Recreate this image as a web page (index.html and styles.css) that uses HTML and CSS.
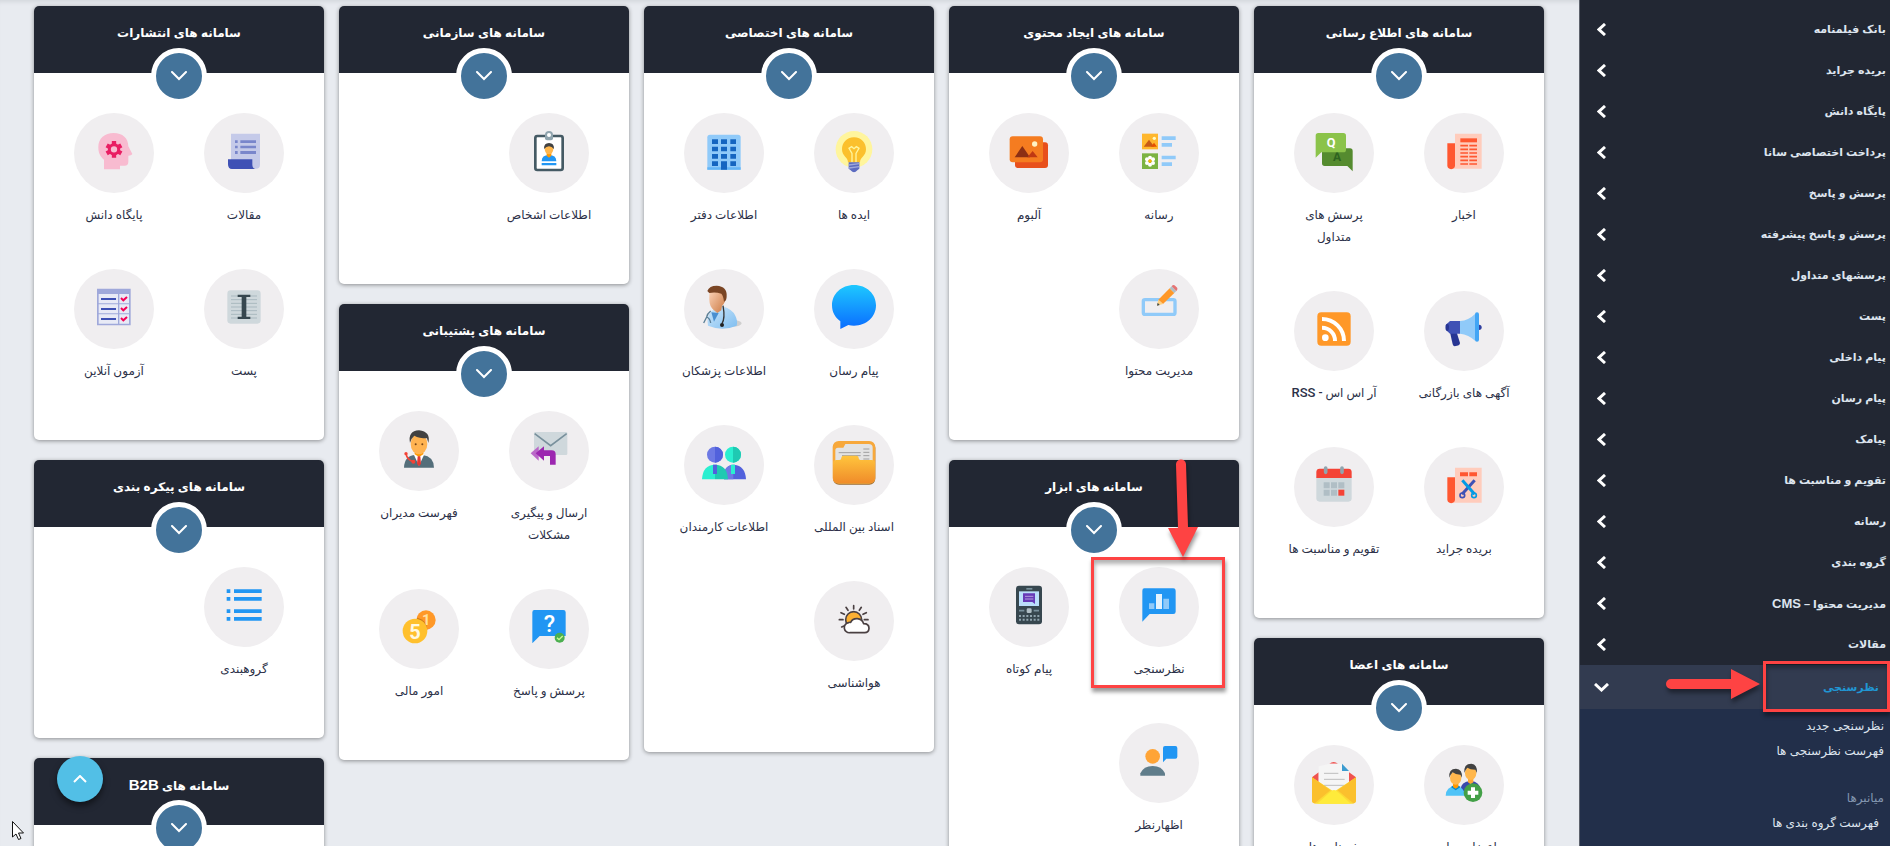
FILE: index.html
```html
<!DOCTYPE html>
<html lang="fa" dir="rtl">
<head>
    <meta charset="UTF-8">
    <title>پنل مدیریت</title>
    <link rel="stylesheet" href="styles.css">
</head>
<body>
<svg class="sprite">
    <symbol id="arrow" viewBox="0 0 9 13"><path d="M8 1L2 6.5L8 12"/></symbol>
    <symbol id="chevron" viewBox="0 0 16 10"><path d="M1 1L8 8L15 1"/></symbol>
</svg>
<div class="layout">
    <!-- منوی کناری -->
    <nav class="sidebar">
        <ul class="menu">
            <li><a href="#">بانک فیلمنامه<svg class="arrow"><use href="#arrow"/></svg></a></li>
            <li><a href="#">بریده جراید<svg class="arrow"><use href="#arrow"/></svg></a></li>
            <li><a href="#">پایگاه دانش<svg class="arrow"><use href="#arrow"/></svg></a></li>
            <li><a href="#">پرداخت اختصاصی سانا<svg class="arrow"><use href="#arrow"/></svg></a></li>
            <li><a href="#">پرسش و پاسخ<svg class="arrow"><use href="#arrow"/></svg></a></li>
            <li><a href="#">پرسش و پاسخ پیشرفته<svg class="arrow"><use href="#arrow"/></svg></a></li>
            <li><a href="#">پرسشهای متداول<svg class="arrow"><use href="#arrow"/></svg></a></li>
            <li><a href="#">پست<svg class="arrow"><use href="#arrow"/></svg></a></li>
            <li><a href="#">پیام داخلی<svg class="arrow"><use href="#arrow"/></svg></a></li>
            <li><a href="#">پیام رسان<svg class="arrow"><use href="#arrow"/></svg></a></li>
            <li><a href="#">پیامک<svg class="arrow"><use href="#arrow"/></svg></a></li>
            <li><a href="#">تقویم و مناسبت ها<svg class="arrow"><use href="#arrow"/></svg></a></li>
            <li><a href="#">رسانه<svg class="arrow"><use href="#arrow"/></svg></a></li>
            <li><a href="#">گروه بندی<svg class="arrow"><use href="#arrow"/></svg></a></li>
            <li><a href="#"><span>مدیریت محتوا – <span class="latin">CMS</span></span><svg class="arrow"><use href="#arrow"/></svg></a></li>
            <li><a href="#">مقالات<svg class="arrow"><use href="#arrow"/></svg></a></li>
            <li class="open">
                <a href="#">نظرسنجی<svg class="arrow arrow-down" viewBox="0 0 15 9"><path d="M1 1L7.5 7L14 1"/></svg></a>
                <span class="mark mark-menu"></span>
                <svg class="pointer pointer-menu" viewBox="0 0 94 30"><path d="M5 10H65V0L94 15L65 30V20H5A5 5 0 0 1 5 10Z"/></svg>
            </li>
        </ul>
        <ul class="submenu">
            <li><a href="#">نظرسنجی جدید</a></li>
            <li><a href="#">فهرست نظرسنجی ها</a></li>
            <li class="submenu-title">میانبرها</li>
            <li class="shortcut"><a href="#">فهرست گروه بندی ها</a></li>
        </ul>
    </nav>

    <!-- کارت سامانه ها -->
    <main class="board">
        <div class="column">
            <section class="card">
                <header class="card-header">
                    <h2>سامانه های اطلاع رسانی</h2>
                    <button class="toggle" aria-label="باز و بسته"><svg><use href="#chevron"/></svg></button>
                </header>
                <div class="tiles">
                    <a class="tile" href="#">
                        <span class="icon"><svg viewBox="0 0 132 132">
                            <path fill="#ffccbc" d="M39 14H119V119H28V100H39Z"/>
                            <path fill="#ff5730" d="M16 43H39V109A11 11 0 0 1 16 109Z"/>
                            <path fill="#ff5730" d="M55 28H105V40H55Z"/>
                            <path stroke="#ff5730" stroke-width="5" stroke-dasharray="23 4" d="M55 50H105M55 61H105M55 72H105M55 83H105M55 94H105M55 105H105"/>
                        </svg></span>
                        <span class="label">اخبار</span>
                    </a>
                    <a class="tile" href="#">
                        <span class="icon"><svg viewBox="0 0 132 132">
                            <path fill="#558b2f" d="M38 58H114Q122 58 122 66V127L106 111H38Q30 111 30 103V66Q30 58 38 58Z"/>
                            <text x="75" y="97" font-size="36" font-weight="bold" fill="#2e6320" text-anchor="middle">A</text>
                            <path fill="#8bc34a" d="M19 12H94Q102 12 102 20V62Q102 70 94 70H28L11 86V20Q11 12 19 12Z"/>
                            <text x="57" y="54" font-size="38" font-weight="bold" fill="#fff" text-anchor="middle">Q</text>
                        </svg></span>
                        <span class="label">پرسش های<br>متداول</span>
                    </a>
                    <a class="tile" href="#">
                        <span class="icon"><svg viewBox="0 0 132 132">
                            <circle cx="111" cy="61" r="8" fill="#303f9f"/>
                            <path fill="#90caf9" d="M54 42Q80 40 100 20V102Q80 82 54 80Z"/>
                            <path fill="#42a5f5" d="M99 22A6 6 0 0 1 111 22V98A6 6 0 0 1 99 98Z"/>
                            <path fill="#283593" d="M24 76H44L54 108Q54 116 38 118Q34 118 32 112Z"/>
                            <path fill="#3f51b5" d="M54 42V80H24L11 68V54L24 42Z"/>
                            <ellipse cx="16" cy="61" rx="5" ry="11" fill="#283593"/>
                        </svg></span>
                        <span class="label">آگهی های بازرگانی</span>
                    </a>
                    <a class="tile" href="#">
                        <span class="icon"><svg viewBox="0 0 132 132">
                            <rect x="16" y="16" width="100" height="100" rx="12" fill="#ff9828"/>
                            <circle cx="40" cy="92" r="10" fill="#fff"/>
                            <path fill="none" stroke="#fff" stroke-width="12" d="M30 62A39 39 0 0 1 69 102M30 36A66 66 0 0 1 96 102"/>
                        </svg></span>
                        <span class="label">آر اس اس - <span class="latin">RSS</span></span>
                    </a>
                    <a class="tile" href="#">
                        <span class="icon"><svg viewBox="0 0 132 132">
                            <path fill="#ffccbc" d="M39 14H119V119H28V100H39Z"/>
                            <path fill="#ff5730" d="M16 43H39V109A11 11 0 0 1 16 109Z"/>
                            <path fill="#ff5730" d="M54 28H78V40H54ZM82 28H105V40H82Z"/>
                            <path stroke="#3f51b5" stroke-width="9" d="M98 52L60 94"/>
                            <path stroke="#039be5" stroke-width="9" d="M61 52L98 94"/>
                            <g fill="none" stroke-width="5"><circle cx="61" cy="97" r="7" stroke="#3f51b5"/><circle cx="96" cy="97" r="7" stroke="#039be5"/></g>
                        </svg></span>
                        <span class="label">بریده جراید</span>
                    </a>
                    <a class="tile" href="#">
                        <span class="icon"><svg viewBox="0 0 132 132">
                            <path fill="#cfd8dc" d="M13 40H119V106Q119 116 109 116H23Q13 116 13 106Z"/>
                            <path fill="#f44336" d="M23 17H109Q119 17 119 27V45H13V27Q13 17 23 17Z"/>
                            <path stroke="#90a4ae" stroke-width="11" stroke-linecap="round" d="M41 15V28M90 15V28"/>
                            <path fill="#b0bec5" d="M35 58H53V76H35ZM57 58H75V76H57ZM79 58H97V76H79ZM35 80H53V98H35ZM57 80H75V98H57Z"/>
                            <path fill="#f44336" d="M79 80H97V98H79Z"/>
                        </svg></span>
                        <span class="label">تقویم و مناسبت ها</span>
                    </a>
                </div>
            </section>
            <section class="card">
                <header class="card-header">
                    <h2>سامانه های اعضا</h2>
                    <button class="toggle" aria-label="باز و بسته"><svg><use href="#chevron"/></svg></button>
                </header>
                <div class="tiles">
                    <a class="tile" href="#">
                        <span class="icon"><svg viewBox="0 0 132 132">
                            <path fill="#3949ab" d="M56 86Q56 62 86 60Q114 62 116 88V95H56Z"/>
                            <path fill="#ffa733" d="M78 50H94V64L86 70L78 64Z"/>
                            <ellipse cx="86" cy="37" rx="17" ry="20" fill="#ffb74d"/>
                            <path fill="#424242" d="M67 36Q64 8 88 8Q107 10 105 36L100 26Q84 26 76 20Q70 26 67 36Z"/>
                            <path fill="#4fc3f7" d="M11 104Q12 77 41 75Q66 77 70 104Z"/>
                            <path fill="#0288d1" d="M27 78L41 88L56 78L50 74H32Z"/>
                            <path fill="#ff9800" d="M33 66H49V78L41 83L33 78Z"/>
                            <ellipse cx="41" cy="51" rx="17" ry="20" fill="#ffb74d"/>
                            <path fill="#424242" d="M22 50Q19 23 42 23Q62 25 60 50L55 41Q40 41 32 34Q26 40 22 50Z"/>
                            <circle cx="93" cy="95" r="28" fill="#43a047"/>
                            <path fill="#fff" d="M87 79H99V89H109V101H99V111H87V101H77V89H87Z"/>
                        </svg></span>
                        <span class="label">اعضای سایت</span>
                    </a>
                    <a class="tile" href="#">
                        <span class="icon"><svg viewBox="0 0 132 132">
                            <path fill="#ef5350" d="M0 49L20 34V66H0ZM132 49L111 34V66H132ZM52 8Q65 -2 78 8Z"/>
                            <path fill="#f5f5f5" d="M20 16L54 8H88L111 32V90H20Z"/>
                            <path fill="#3b9bd0" d="M90 8L111 30H90Z"/>
                            <path stroke="#bdbdbd" stroke-width="3" d="M36 37H79M36 55H98M36 73H98"/>
                            <path fill="#fdd835" d="M0 49L66 92L132 49V118Q132 128 122 128H10Q0 128 0 118Z"/>
                            <path fill="#fbc02d" d="M0 49L55 88L8 127Q0 126 0 118ZM132 49L77 88L124 127Q132 126 132 118Z"/>
                            <path fill="#ffeb3b" d="M15 128L58 90Q66 84 74 90L117 128Z"/>
                        </svg></span>
                        <span class="label">خبرنامه ها</span>
                    </a>
                </div>
            </section>
        </div>

        <div class="column">
            <section class="card">
                <header class="card-header">
                    <h2>سامانه های ایجاد محتوی</h2>
                    <button class="toggle" aria-label="باز و بسته"><svg><use href="#chevron"/></svg></button>
                </header>
                <div class="tiles">
                    <a class="tile" href="#">
                        <span class="icon"><svg viewBox="0 0 132 132">
                            <path fill="#ffb72d" d="M15 14H63V61H15Z"/>
                            <path fill="#c75a16" d="M20 53L36 32L52 53Z"/>
                            <path fill="#e65100" d="M42 53L51 41L60 53Z"/>
                            <circle cx="52" cy="28" r="5" fill="#fff9c4"/>
                            <path fill="#7cb342" d="M15 73H63V120H15Z"/>
                            <g fill="#fff"><circle cx="39" cy="86" r="6"/><circle cx="39" cy="107" r="6"/><circle cx="30" cy="91" r="6"/><circle cx="48" cy="91" r="6"/><circle cx="30" cy="102" r="6"/><circle cx="48" cy="102" r="6"/></g>
                            <circle cx="39" cy="96" r="5" fill="#ffb300"/>
                            <path fill="#90caf9" d="M74 22H116V33H74ZM74 42H105V53H74ZM74 80H116V91H74ZM74 100H105V111H74Z"/>
                        </svg></span>
                        <span class="label">رسانه</span>
                    </a>
                    <a class="tile" href="#">
                        <span class="icon"><svg viewBox="0 0 132 132">
                            <rect x="24" y="40" width="99" height="77" rx="9" fill="#e8501c"/>
                            <rect x="8" y="22" width="100" height="78" rx="9" fill="#f57c20"/>
                            <path fill="#8c2f14" d="M23 85L46 51L69 85Z"/>
                            <path fill="#bf3813" d="M61 85L77 66L92 85Z"/>
                            <circle cx="83" cy="45" r="8" fill="#fff3c4"/>
                        </svg></span>
                        <span class="label">آلبوم</span>
                    </a>
                    <a class="tile" href="#">
                        <span class="icon"><svg viewBox="0 0 132 132">
                            <rect x="19" y="44" width="95" height="44" rx="5" fill="none" stroke="#90caf9" stroke-width="10"/>
                            <path fill="#ff9828" d="M64 44L98 10L112 24L78 57Z"/>
                            <path fill="#ffd180" d="M64 44L78 57L60 62Z"/>
                            <path fill="#37474f" d="M62 53L68 60L60 62Z"/>
                            <path fill="#b0bec5" d="M98 10L104 4L118 18L112 24Z"/>
                            <path fill="#e57373" d="M104 4Q109 -3 115 3L119 7Q124 12 118 18Z"/>
                        </svg></span>
                        <span class="label">مدیریت محتوا</span>
                    </a>
                </div>
            </section>
            <section class="card">
                <header class="card-header">
                    <h2>سامانه های ابزار</h2>
                    <button class="toggle" aria-label="باز و بسته"><svg><use href="#chevron"/></svg></button>
                </header>
                <div class="tiles">
                    <a class="tile" href="#">
                        <span class="icon"><svg viewBox="0 0 132 132">
                            <path fill="#2196f3" d="M22 16H109Q116 16 116 23V86Q116 93 109 93H38L16 116V23Q16 16 22 16Z"/>
                            <path fill="#90caf9" d="M36 61H52V78H36ZM79 47H96V78H79Z"/>
                            <path fill="#e3f2fd" d="M57 33H75V78H57Z"/>
                        </svg></span>
                        <span class="label">نظرسنجی</span>
                        <span class="mark mark-tile"></span>
                        <svg class="pointer pointer-tile" viewBox="0 0 30 98"><path d="M8 6A5 5 0 0 1 18 5L20 68H30L15 98L0 69H10Z"/></svg>
                    </a>
                    <a class="tile" href="#">
                        <span class="icon"><svg viewBox="0 0 132 132">
                            <rect x="27" y="8" width="78" height="116" rx="9" fill="#37474f"/>
                            <path fill="#78909c" d="M58 15H76V20H58Z"/>
                            <path fill="#bbdefb" d="M36 25H96V69H36Z"/>
                            <path fill="#673ab7" d="M48 31H84V63L76 57H48Z"/>
                            <path stroke="#b39ddb" stroke-width="3" d="M54 40H79M54 48H79"/>
                            <path stroke="#78909c" stroke-width="5" d="M36 83H52M80 83H96"/>
                            <rect x="59" y="76" width="15" height="14" rx="4" fill="#b0bec5"/>
                            <path stroke="#90a4ae" stroke-width="6" stroke-dasharray="6 5" d="M36 99H97M36 110H97"/>
                        </svg></span>
                        <span class="label">پیام کوتاه</span>
                    </a>
                    <a class="tile" href="#">
                        <span class="icon"><svg viewBox="0 0 132 132">
                            <circle cx="47" cy="52" r="22" fill="#ffa436"/>
                            <path fill="#607d8b" d="M10 110V103Q20 81 47 81Q74 81 84 103V110Z"/>
                            <path fill="#2196f3" d="M84 21H115Q121 21 121 27V53Q121 59 115 59H88L78 70V27Q78 21 84 21Z"/>
                        </svg></span>
                        <span class="label">اظهارنظر</span>
                    </a>
                </div>
            </section>
        </div>

        <div class="column">
            <section class="card">
                <header class="card-header">
                    <h2>سامانه های اختصاصی</h2>
                    <button class="toggle" aria-label="باز و بسته"><svg><use href="#chevron"/></svg></button>
                </header>
                <div class="tiles">
                    <a class="tile" href="#">
                        <span class="icon"><svg viewBox="0 0 132 132">
                            <circle cx="66" cy="61" r="55" fill="#fff59d"/>
                            <path fill="#fbc02d" d="M66 25C43 25 30 42 30 61C30 82 48 84 48 100H84C84 84 102 82 102 61C102 42 89 25 66 25Z"/>
                            <path fill="none" stroke="#fff59d" stroke-width="4" d="M60 100V73L51 58L59 53L66 59L73 53L81 58L72 73V100"/>
                            <path fill="#5c6bc0" d="M50 100H82V119L76 124Q66 136 56 124L50 119Z"/>
                            <path stroke="#9fa8da" stroke-width="4" d="M50 108L82 104M50 117L82 113"/>
                        </svg></span>
                        <span class="label">ایده ها</span>
                    </a>
                    <a class="tile" href="#">
                        <span class="icon"><svg viewBox="0 0 132 132">
                            <path fill="#90caf9" d="M24 17H108Q116 17 116 25V122H16V25Q16 17 24 17Z"/>
                            <path fill="#64b5f6" d="M16 115H116V122H16Z"/>
                            <path fill="#1565c0" d="M30 31H48V45H30ZM57 31H75V45H57ZM85 31H102V45H85ZM30 53H48V67H30ZM57 53H75V67H57ZM85 53H102V67H85ZM30 75H48V89H30ZM57 75H75V89H57ZM85 75H102V89H85ZM30 97H48V111H30ZM57 97H75V122H57ZM85 97H102V111H85Z"/>
                        </svg></span>
                        <span class="label">اطلاعات دفتر</span>
                    </a>
                    <a class="tile" href="#">
                        <span class="icon"><svg viewBox="0 0 132 132">
                            <defs><linearGradient id="msg" x2="0" y2="1"><stop stop-color="#1ec8ff"/><stop offset="1" stop-color="#0a6cff"/></linearGradient></defs>
                            <path fill="url(#msg)" d="M66 0C28 0 0 27 0 61C0 82 10 98 25 109V132L49 120Q57 122 66 122C104 122 132 95 132 61C132 27 104 0 66 0Z"/>
                        </svg></span>
                        <span class="label">پیام رسان</span>
                    </a>
                    <a class="tile" href="#">
                        <span class="icon"><svg viewBox="0 0 132 132">
                            <defs>
                                <linearGradient id="coat" x2="1" y2="1"><stop stop-color="#cfe8fb"/><stop offset="1" stop-color="#7ebdf0"/></linearGradient>
                                <linearGradient id="face" x2="1" y2="1"><stop stop-color="#ffd9bf"/><stop offset="1" stop-color="#c9763f"/></linearGradient>
                            </defs>
                            <ellipse cx="92" cy="115" rx="27" ry="10" fill="#cfcfcf"/>
                            <path fill="url(#coat)" d="M18 122Q12 96 28 78L40 72L62 64Q92 74 100 92Q108 108 104 122Q62 140 18 122Z"/>
                            <path fill="#4a8fd0" d="M28 82L50 84L36 110Z"/>
                            <path fill="url(#face)" d="M22 28Q22 8 46 8Q72 10 71 38Q70 54 60 62L58 76L46 84L34 74L30 70Q20 60 22 28Z"/>
                            <path fill="#7a4524" d="M16 18Q22 2 44 2Q76 4 74 34Q74 48 66 50Q64 32 58 26Q40 20 22 24Q20 22 16 18Z"/>
                            <path fill="none" stroke="#333" stroke-width="4" d="M63 62Q70 100 60 116"/>
                            <path fill="none" stroke="#5b7f96" stroke-width="4" d="M26 78Q16 86 14 96L5 114M14 96Q24 100 26 114"/>
                            <circle cx="60" cy="120" r="6" fill="#222"/>
                        </svg></span>
                        <span class="label">اطلاعات پزشکان</span>
                    </a>
                    <a class="tile" href="#">
                        <span class="icon"><svg viewBox="0 0 132 132">
                            <defs><linearGradient id="folder" x2="0" y2="1"><stop stop-color="#ffc53d"/><stop offset="1" stop-color="#f08c2a"/></linearGradient></defs>
                            <rect x="3" y="3" width="127" height="128" rx="18" fill="#9b6a2e"/>
                            <rect x="2" y="0" width="128" height="128" rx="18" fill="#f7a83b"/>
                            <path fill="#e3e3e3" d="M10 28Q10 20 18 20H34L40 9H110Q122 9 122 20V70H10Z"/>
                            <path stroke="#9e9e9e" stroke-width="3" d="M20 35H86M94 24H112M94 34H112M94 44H112M94 54H112M30 44H86"/>
                            <path fill="url(#folder)" d="M3 66Q3 57 14 57H22Q28 57 28 50Q28 44 36 44H72Q80 44 80 50Q80 57 88 57H118Q129 57 129 66V110Q129 126 112 126H20Q3 126 3 110Z"/>
                        </svg></span>
                        <span class="label">اسناد بین المللی</span>
                    </a>
                    <a class="tile" href="#">
                        <span class="icon"><svg viewBox="0 0 132 132">
                            <path fill="#5261dc" d="M66 115Q62 72 96 71Q130 74 132 115Z"/>
                            <path fill="#6d79e4" d="M66 115Q62 74 94 71V115Z"/>
                            <path fill="#2aefd0" d="M87 71H99V99H87Z"/>
                            <circle cx="93" cy="41" r="24" fill="#2aefd0"/>
                            <path fill="#1fc9b2" d="M93 17A24 24 0 0 1 93 65Z"/>
                            <path fill="#2aefd0" d="M0 115Q2 72 39 71V115Z"/>
                            <path fill="#1fc9b2" d="M78 115Q76 72 39 71V115Z"/>
                            <path fill="#5261dc" d="M33 71H45V99H33Z"/>
                            <circle cx="39" cy="41" r="24" fill="#6d79e4"/>
                            <path fill="#5261dc" d="M39 17A24 24 0 0 1 39 65Z"/>
                        </svg></span>
                        <span class="label">اطلاعات کارمندان</span>
                    </a>
                    <a class="tile" href="#">
                        <span class="icon"><svg viewBox="0 0 132 132">
                            <g stroke="#4a4042" stroke-width="5" stroke-linecap="round" stroke-linejoin="round">
                                <path d="M65 26V36M42 31L48 40M88 31L82 40M27 47L37 52M103 47L93 52M22 68H33M97 68H108M29 90L38 86"/>
                                <circle cx="65" cy="68" r="24" fill="#fbb034"/>
                                <path fill="#fff" d="M54 107A15 15 0 0 1 50 77Q52 75 56 76Q62 64 76 65Q90 66 95 80Q111 80 111 94Q110 107 98 107Z"/>
                            </g>
                        </svg></span>
                        <span class="label">هواشناسی</span>
                    </a>
                </div>
            </section>
        </div>

        <div class="column">
            <section class="card">
                <header class="card-header">
                    <h2>سامانه های سازمانی</h2>
                    <button class="toggle" aria-label="باز و بسته"><svg><use href="#chevron"/></svg></button>
                </header>
                <div class="tiles">
                    <a class="tile" href="#">
                        <span class="icon"><svg viewBox="0 0 132 132">
                            <rect x="25" y="21" width="82" height="102" rx="6" fill="#fff" stroke="#455a64" stroke-width="8"/>
                            <path fill="#90a4ae" d="M54 18A12 12 0 0 1 78 18V28Q78 34 72 34H60Q54 34 54 28Z"/>
                            <circle cx="66" cy="18" r="6" fill="#fff"/>
                            <path fill="#2196f3" d="M44 97Q44 78 66 78Q88 78 88 97ZM44 102H88V109H44Z"/>
                            <path fill="#ff9800" d="M59 70H73V80L66 86L59 80Z"/>
                            <ellipse cx="66" cy="60" rx="13" ry="16" fill="#ffb74d"/>
                            <path fill="#424242" d="M51 60Q50 42 66 42Q82 42 81 60Q74 52 66 52Q58 52 51 60Z"/>
                        </svg></span>
                        <span class="label">اطلاعات اشخاص</span>
                    </a>
                </div>
            </section>
            <section class="card">
                <header class="card-header">
                    <h2>سامانه های پشتیبانی</h2>
                    <button class="toggle" aria-label="باز و بسته"><svg><use href="#chevron"/></svg></button>
                </header>
                <div class="tiles">
                    <a class="tile" href="#">
                        <span class="icon"><svg viewBox="0 0 132 132">
                            <rect x="21" y="15" width="100" height="69" rx="4" fill="#cfd8dc"/>
                            <path fill="none" stroke="#78909c" stroke-width="5" d="M23 20L71 56L119 20"/>
                            <path fill="#ba68c8" d="M11 79L35 58V101Z"/>
                            <path fill="#9c27b0" d="M26 79L51 58V70H74Q86 70 86 82V113H69V87H51V101Z"/>
                        </svg></span>
                        <span class="label">ارسال و پیگیری مشکلات</span>
                    </a>
                    <a class="tile" href="#">
                        <span class="icon"><svg viewBox="0 0 132 132">
                            <path fill="#546e7a" d="M21 122Q22 86 55 84H77Q110 88 111 122Z"/>
                            <path fill="#fff" d="M50 82H82L66 116Z"/>
                            <path fill="#ff9800" d="M53 70H79V82L66 90L53 82Z"/>
                            <path fill="#e53935" d="M62 88H70L72 110L66 118L60 110Z"/>
                            <ellipse cx="66" cy="51" rx="25" ry="31" fill="#ffb351"/>
                            <path fill="#424242" d="M39 48Q32 12 66 10Q102 14 94 48L90 34Q66 34 52 26Q42 34 39 48Z"/>
                            <circle cx="56" cy="52" r="3" fill="#784719"/><circle cx="76" cy="52" r="3" fill="#784719"/>
                            <path fill="none" stroke="#f44336" stroke-width="5" d="M27 80Q30 98 48 104"/>
                            <circle cx="27" cy="80" r="5" fill="#f44336"/><circle cx="49" cy="104" r="6" fill="#f44336"/>
                        </svg></span>
                        <span class="label">فهرست مدیران</span>
                    </a>
                    <a class="tile" href="#">
                        <span class="icon"><svg viewBox="0 0 132 132">
                            <path fill="#2196f3" d="M22 15H109Q116 15 116 22V93H38L16 115V22Q16 15 22 15Z"/>
                            <text x="67" y="80" font-size="70" font-weight="500" fill="#fff" text-anchor="middle">?</text>
                            <circle cx="98" cy="98" r="15" fill="#4caf50"/>
                            <path fill="none" stroke="#ccff90" stroke-width="4" d="M90 98L96 104L107 93"/>
                        </svg></span>
                        <span class="label">پرسش و پاسخ</span>
                    </a>
                    <a class="tile" href="#">
                        <span class="icon"><svg viewBox="0 0 132 132">
                            <circle cx="87" cy="45" r="29" fill="#ff9828"/>
                            <path fill="#c77616" d="M60 38A38 38 0 0 1 91 74Q66 76 60 38Z"/>
                            <text x="88" y="61" font-size="44" font-weight="bold" fill="#ffe0a0" text-anchor="middle">1</text>
                            <circle cx="54" cy="78" r="37" fill="#ffc02d"/>
                            <text x="54" y="101" font-size="60" font-weight="bold" fill="#fff8e1" text-anchor="middle">5</text>
                        </svg></span>
                        <span class="label">امور مالی</span>
                    </a>
                </div>
            </section>
        </div>

        <div class="column">
            <section class="card">
                <header class="card-header">
                    <h2>سامانه های انتشارات</h2>
                    <button class="toggle" aria-label="باز و بسته"><svg><use href="#chevron"/></svg></button>
                </header>
                <div class="tiles">
                    <a class="tile" href="#">
                        <span class="icon"><svg viewBox="0 0 132 132">
                            <path fill="#c5cae9" d="M27 14H114V107Q114 119 102 119H27Z"/>
                            <path fill="#7986cb" d="M39 34H47V42H39ZM55 34H102V42H55ZM39 50H47V58H39ZM55 50H102V58H55ZM39 66H47V75H39ZM55 66H102V75H55Z"/>
                            <path fill="#3f51b5" d="M18 91H91V108Q92 120 102 120H30Q18 120 18 106Z"/>
                        </svg></span>
                        <span class="label">مقالات</span>
                    </a>
                    <a class="tile" href="#">
                        <span class="icon"><svg viewBox="0 0 132 132">
                            <path fill="#f8bbd0" d="M36 121V92C24 82 19 72 19 54C19 28 38 12 65 12C92 12 109 28 109 52L121 75Q120 79 109 80V98Q109 110 98 110H84V121Z"/>
                            <circle cx="66" cy="61" r="14" fill="none" stroke="#e91e63" stroke-width="9"/>
                            <path stroke="#e91e63" stroke-width="13" d="M66 36V46M66 76V86M44 49L53 54M79 68L88 73M44 73L53 68M79 54L88 49"/>
                        </svg></span>
                        <span class="label">پایگاه دانش</span>
                    </a>
                    <a class="tile" href="#">
                        <span class="icon"><svg viewBox="0 0 132 132">
                            <rect x="16" y="16" width="100" height="100" rx="10" fill="#cfd8dc"/>
                            <path stroke="#a9b8bf" stroke-width="3" d="M27 33H105M27 44H105M27 55H105M27 66H105M27 77H105M27 88H105M27 99H105"/>
                            <path fill="#37474f" d="M47 29H85V36H73V95H85V102H47V95H59V36H47Z"/>
                        </svg></span>
                        <span class="label">پست</span>
                    </a>
                    <a class="tile" href="#">
                        <span class="icon"><svg viewBox="0 0 132 132">
                            <path fill="#9fa8da" d="M15 11H116V121H15Z"/>
                            <path fill="#e8eaf6" d="M20 27H78V55H20ZM82 27H111V55H82ZM20 58H78V85H20ZM82 58H111V85H82ZM20 88H78V116H20ZM82 88H111V116H82Z"/>
                            <path stroke="#3f51b5" stroke-width="6" d="M27 42H72M27 72H72M27 102H72"/>
                            <path fill="none" stroke="#f50057" stroke-width="6" d="M87 39L94 46L105 36M87 69L94 76L105 66M87 99L94 106L105 96"/>
                        </svg></span>
                        <span class="label">آزمون آنلاین</span>
                    </a>
                </div>
            </section>
            <section class="card">
                <header class="card-header">
                    <h2>سامانه های پیکره بندی</h2>
                    <button class="toggle" aria-label="باز و بسته"><svg><use href="#chevron"/></svg></button>
                </header>
                <div class="tiles">
                    <a class="tile" href="#">
                        <span class="icon"><svg viewBox="0 0 132 132">
                            <path fill="#2196f3" d="M14 19H25V30H14ZM36 19H119V30H36ZM14 42H25V53H14ZM36 42H119V53H36ZM14 79H25V90H14ZM36 79H119V90H36ZM14 102H25V113H14ZM36 102H119V113H36Z"/>
                        </svg></span>
                        <span class="label">گروهبندی</span>
                    </a>
                </div>
            </section>
            <section class="card">
                <header class="card-header">
                    <h2>سامانه های <span class="latin">B2B</span></h2>
                    <button class="toggle" aria-label="باز و بسته"><svg><use href="#chevron"/></svg></button>
                </header>
                <div class="tiles"></div>
            </section>
        </div>
    </main>
</div>

<button class="to-top" aria-label="بالا"><svg viewBox="0 0 14 8"><path d="M1 7L7 1L13 7"/></svg></button>
<svg class="cursor" viewBox="0 0 12 19"><path d="M0.5 0.5V16L4 13L6.5 18.5L9 17.5L6.5 12H11.5Z"/></svg>
</body>
</html>
```
FILE: styles.css
```css
* {
    box-sizing: border-box;
}

body {
    margin: 0;
    background-color: #e8ebf0;
    font-family: Roboto, "DejaVu Sans", sans-serif;
    font-size: 12px;
    color: #2c3148;
}

ul {
    list-style: none;
    margin: 0;
    padding: 0;
}

a {
    color: inherit;
    text-decoration: none;
}

button {
    padding: 0;
    cursor: pointer;
}

.sprite {
    display: none;
}

.latin {
    font-size: 13px;
}

.layout {
    display: flex;
    height: 100vh;
    overflow: hidden;
}

/* منوی کناری */
.sidebar {
    flex: 0 0 311px;
    display: flex;
    flex-direction: column;
    padding-top: 9px;
    background-color: #222733;
    border-left: 1px solid #5d626c;
    font-family: "Liberation Sans", "DejaVu Sans", sans-serif;
    color: #dde4ee;
}

.menu {
    font-size: 11px;
    font-weight: bold;
}

.menu a {
    display: flex;
    align-items: center;
    justify-content: space-between;
    height: 41px;
    padding: 0 4px 0 17px;
}

.menu .open {
    position: relative;
    background-color: #323b50;
    color: #2196d3;
}

.menu .open a {
    height: 44px;
    padding: 0 11px 0 14px;
}

.arrow {
    width: 9px;
    height: 13px;
    fill: none;
    stroke: #fff;
    stroke-width: 3;
}

.arrow-down {
    width: 15px;
    height: 9px;
}

.submenu {
    flex: 1;
    padding: 5px 6px;
    background-color: #222f4a;
    line-height: 25px;
}

.submenu-title {
    margin-top: 22px;
    color: #8296b0;
}

.shortcut {
    padding-right: 5px;
}

/* کارت ها */
.board {
    flex: 1;
    display: flex;
    align-items: flex-start;
    gap: 15px;
    padding: 6px 35px 0 34px;
    box-shadow: inset 0 5px 4px -3px #d3d7dc;
}

.column {
    flex: 1;
    display: flex;
    flex-direction: column;
    gap: 20px;
}

.card {
    background-color: #fff;
    border-radius: 5px;
    box-shadow: 0 1px 4px rgba(0, 0, 0, 0.4);
}

.card-header {
    position: relative;
    height: 67px;
    padding-top: 16px;
    background-color: #222733;
    border-radius: 5px 5px 0 0;
    text-align: center;
}

.card-header h2 {
    margin: 0;
    font-family: "Liberation Sans", "DejaVu Sans", sans-serif;
    font-size: 12px;
    line-height: 22px;
    color: #fff;
}

.card-header .latin {
    font-size: 15px;
}

.toggle {
    position: absolute;
    bottom: -31px;
    left: calc(50% - 28px);
    display: flex;
    align-items: center;
    justify-content: center;
    width: 56px;
    height: 56px;
    border: 5px solid #fff;
    border-radius: 50%;
    background-color: #43739a;
}

.toggle svg {
    width: 16px;
    height: 10px;
    fill: none;
    stroke: #fff;
    stroke-width: 2;
    stroke-linecap: round;
}

.tiles {
    display: grid;
    grid-template-columns: 1fr 1fr;
    min-height: 211px;
    padding: 40px 15px 15px;
}

.tile {
    position: relative;
    display: flex;
    flex-direction: column;
    align-items: center;
    gap: 11px;
    padding-bottom: 43px;
}

.icon {
    width: 80px;
    height: 80px;
    padding: 16px 18px;
    border-radius: 50%;
    background-color: #f0eef0;
}

.icon svg {
    display: block;
    width: 44px;
    height: 44px;
    overflow: visible;
}

.label {
    padding: 0 15px;
    line-height: 22px;
    font-weight: 500;
    text-align: center;
}

/* کادر و فلش راهنما */
.mark {
    position: absolute;
    border: 3px solid #fe4343;
    box-shadow: 1px 4px 4px rgba(0, 0, 0, 0.4), inset 1px 4px 4px rgba(0, 0, 0, 0.3);
}

.mark-tile {
    top: -10px;
    left: -3px;
    width: 134px;
    height: 131px;
}

.mark-menu {
    top: -4px;
    right: 0;
    width: 127px;
    height: 51px;
}

.pointer {
    position: absolute;
    fill: #fe4343;
    filter: drop-shadow(1px 4px 2px rgba(0, 0, 0, 0.4));
}

.pointer-tile {
    top: -108px;
    left: 74px;
    width: 30px;
    height: 98px;
}

.pointer-menu {
    top: 4px;
    right: 130px;
    width: 94px;
    height: 30px;
}

.to-top {
    position: fixed;
    left: 57px;
    bottom: 44px;
    display: flex;
    align-items: center;
    justify-content: center;
    width: 46px;
    height: 46px;
    border: none;
    border-radius: 50%;
    background-color: #52bfe6;
    box-shadow: 0 4px 6px rgba(0, 0, 0, 0.5);
}

.to-top svg {
    width: 14px;
    height: 8px;
    fill: none;
    stroke: #fff;
    stroke-width: 2;
}

.cursor {
    position: fixed;
    left: 12px;
    bottom: 6px;
    width: 12px;
    height: 19px;
    fill: #fff;
    stroke: #111;
}
```
